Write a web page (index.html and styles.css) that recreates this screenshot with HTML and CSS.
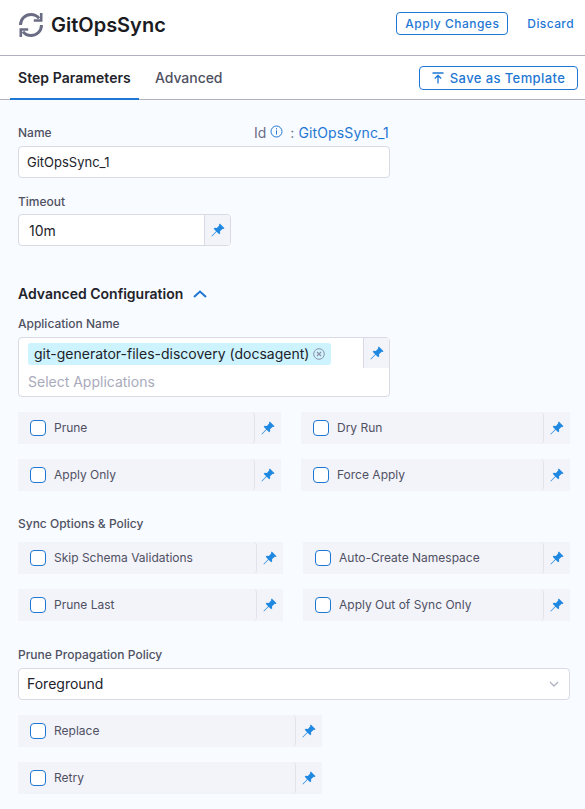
FILE: index.html
```html
<!DOCTYPE html>
<html lang="en">
<head>
    <meta charset="UTF-8">
    <meta name="viewport" content="width=device-width, initial-scale=1.0">
    <title>GitOpsSync</title>
    <link rel="stylesheet" href="styles.css">
</head>
<body>
    <svg class="defs" width="0" height="0">
        <symbol id="pin" viewBox="0 0 14 14">
            <path d="M8.800 .5 13.500 5.200 12.600 6 11.700 5.700 9 8.200 9.200 10.300 8.200 11.300 5.600 8.700 .9 13.500 .5 13.100 5.100 8.200 2.700 5.800 3.700 4.800 5.900 5 8.300 2.300 8 1.400Z" fill="currentColor"/>
        </symbol>
    </svg>

    <header class="top-bar">
        <div class="title">
            <svg class="sync-icon" width="26" height="26" viewBox="0 0 26 26" fill="none" stroke="#6b6d85" stroke-width="3">
                <path d="M2.500 13C2.500 7 7.200 2.500 13 2.500c3.300 0 6.200 1.500 8 3.900"/>
                <path d="M23.500 13C23.500 19 18.800 23.500 13 23.500c-3.300 0-6.200-1.500-8-3.900"/>
                <path d="M23.200 1V8.500H15.800" stroke-width="2.600"/>
                <path d="M2.800 25V17.500H10.200" stroke-width="2.600"/>
            </svg>
            <h1>GitOpsSync</h1>
        </div>
        <div class="top-actions">
            <button class="btn-outline apply">Apply Changes</button>
            <a class="discard" href="#">Discard</a>
        </div>
    </header>

    <nav class="tabs">
        <a class="tab active" href="#">Step Parameters</a>
        <a class="tab" href="#">Advanced</a>
        <button class="btn-outline save">
            <svg width="12" height="12" viewBox="0 0 12 12" fill="none" stroke="currentColor" stroke-width="1.300">
                <path d="M.5 1H11.500M6 11.500V3.500M2.800 6.500 6 3.500 9.200 6.500"/>
            </svg>
            Save as Template
        </button>
    </nav>

    <main class="content">
        <div class="name-head">
            <label class="field-label">Name</label>
            <div class="id-line">
                <span class="id-text">Id</span>
                <svg class="info" width="13" height="13" viewBox="0 0 13 13" fill="none" stroke="#1f77d4">
                    <circle cx="6.500" cy="6.500" r="5.500"/>
                    <path d="M6.500 5.500V9.500M6.500 3.200V4.400"/>
                </svg>
                <span class="id-colon">:</span>
                <span class="id-value">GitOpsSync_1</span>
            </div>
        </div>
        <div class="input name-input">GitOpsSync_1</div>

        <label class="field-label timeout-label">Timeout</label>
        <div class="input timeout-input">
            <span class="timeout-value">10m</span>
            <span class="pin-cell"><svg class="pin" width="14" height="14"><use href="#pin"/></svg></span>
        </div>

        <div class="section-head">
            <h2>Advanced Configuration</h2>
            <svg width="14" height="8" viewBox="0 0 14 8" fill="none" stroke="#1f77d4" stroke-width="2">
                <path d="M1 7 7 1.500 13 7"/>
            </svg>
        </div>

        <label class="field-label app-label">Application Name</label>
        <div class="app-box">
            <div class="app-top">
                <span class="chip">
                    <span class="chip-text">git-generator-files-discovery (docsagent)</span>
                    <svg width="12" height="12" viewBox="0 0 12 12" fill="none" stroke="#8f90a6">
                        <circle cx="6" cy="6" r="5.300"/>
                        <path d="M4 4 8 8M8 4 4 8" stroke-width="1.200"/>
                    </svg>
                </span>
                <span class="pin-cell"><svg class="pin" width="14" height="14"><use href="#pin"/></svg></span>
            </div>
            <div class="placeholder">Select Applications</div>
        </div>

        <div class="check-grid first-grid">
            <div class="check-row"><span class="check-main"><i class="box"></i><span class="check-text">Prune</span></span><span class="pin-cell"><svg class="pin" width="14" height="14"><use href="#pin"/></svg></span></div>
            <div class="check-row"><span class="check-main"><i class="box"></i><span class="check-text">Dry Run</span></span><span class="pin-cell"><svg class="pin" width="14" height="14"><use href="#pin"/></svg></span></div>
            <div class="check-row"><span class="check-main"><i class="box"></i><span class="check-text">Apply Only</span></span><span class="pin-cell"><svg class="pin" width="14" height="14"><use href="#pin"/></svg></span></div>
            <div class="check-row"><span class="check-main"><i class="box"></i><span class="check-text">Force Apply</span></span><span class="pin-cell"><svg class="pin" width="14" height="14"><use href="#pin"/></svg></span></div>
        </div>

        <h3 class="sub-head">Sync Options &amp; Policy</h3>
        <div class="check-grid second-grid">
            <div class="check-row"><span class="check-main"><i class="box"></i><span class="check-text">Skip Schema Validations</span></span><span class="pin-cell"><svg class="pin" width="14" height="14"><use href="#pin"/></svg></span></div>
            <div class="check-row"><span class="check-main"><i class="box"></i><span class="check-text">Auto-Create Namespace</span></span><span class="pin-cell"><svg class="pin" width="14" height="14"><use href="#pin"/></svg></span></div>
            <div class="check-row"><span class="check-main"><i class="box"></i><span class="check-text">Prune Last</span></span><span class="pin-cell"><svg class="pin" width="14" height="14"><use href="#pin"/></svg></span></div>
            <div class="check-row"><span class="check-main"><i class="box"></i><span class="check-text">Apply Out of Sync Only</span></span><span class="pin-cell"><svg class="pin" width="14" height="14"><use href="#pin"/></svg></span></div>
        </div>

        <label class="field-label policy-label">Prune Propagation Policy</label>
        <div class="input select-input">
            <span class="select-value">Foreground</span>
            <svg width="10" height="6" viewBox="0 0 10 6" fill="none" stroke="#b0b1c3" stroke-width="1.300">
                <path d="M1 1 5 5 9 1"/>
            </svg>
        </div>

        <div class="single-col">
            <div class="check-row"><span class="check-main"><i class="box"></i><span class="check-text">Replace</span></span><span class="pin-cell"><svg class="pin" width="14" height="14"><use href="#pin"/></svg></span></div>
            <div class="check-row"><span class="check-main"><i class="box"></i><span class="check-text">Retry</span></span><span class="pin-cell"><svg class="pin" width="14" height="14"><use href="#pin"/></svg></span></div>
        </div>
    </main>
</body>
</html>
```

FILE: styles.css
```css
* {
    box-sizing: border-box;
}
body {
    margin: 0;
    height: 809px;
    overflow: hidden;
    font-family: Inter, "Liberation Sans", sans-serif;
    background-color: #f8fbff;
    color: #22222a;
}
.defs {
    display: none;
}
.top-bar {
    height: 56px;
    background-color: white;
    border-bottom: 1px solid #b0b1c0;
    display: flex;
    align-items: center;
    justify-content: space-between;
    padding: 0 11px 8px 18px;
}
.title {
    display: flex;
    align-items: center;
    gap: 7px;
    margin-top: 2px;
}
h1 {
    margin: 0;
    font-size: 20px;
    font-weight: 600;
    color: #1b1b22;
}
.top-actions {
    display: flex;
    align-items: center;
    gap: 19px;
}
.btn-outline {
    font-family: inherit;
    font-size: 12px;
    font-weight: 500;
    letter-spacing: .5px;
    color: #1f77d4;
    background: white;
    border: 1px solid #1f77d4;
    border-radius: 4px;
    padding: 0;
}
.apply {
    width: 112px;
    height: 23px;
}
.discard {
    font-size: 12px;
    font-weight: 500;
    letter-spacing: .4px;
    color: #1f77d4;
    text-decoration: none;
}
.tabs {
    height: 44px;
    background-color: white;
    border-bottom: 1px solid #b0b1c0;
    display: flex;
    align-items: center;
    padding: 0 7px 0 10px;
}
.tab {
    height: 43px;
    line-height: 43px;
    font-size: 14px;
    font-weight: 500;
    color: #4f5162;
    text-decoration: none;
    padding: 0 8px;
    letter-spacing: -.05px;
}
.tab.active {
    width: 129px;
    font-weight: 600;
    letter-spacing: .05px;
    color: #22222a;
    border-bottom: 2px solid #1f77d4;
    margin-right: 8px;
    margin-bottom: -1px;
    height: 44px;
}
.save {
    margin-left: auto;
    width: 159px;
    height: 24px;
    display: flex;
    align-items: center;
    justify-content: center;
    gap: 6px;
    font-size: 13px;
    letter-spacing: .4px;
}
.content {
    padding: 24px 15px 0 18px;
}
.field-label {
    display: block;
    height: 16px;
    font-size: 12px;
    font-weight: 500;
    line-height: 18px;
    color: #4f5162;
}
.name-head {
    width: 372px;
    display: flex;
    justify-content: space-between;
    align-items: center;
    height: 16px;
    margin-bottom: 6px;
}
.id-line {
    display: flex;
    align-items: center;
    width: 136px;
    font-size: 14px;
    line-height: 18px;
    color: #6b6d85;
    padding-top: 2px;
}
.id-text {
    margin-right: 4px;
}
.info {
    margin-top: -4px;
}
.id-colon {
    margin: 0 4px 0 7px;
}
.id-value {
    color: #1f77d4;
    letter-spacing: .15px;
    white-space: nowrap;
}
.input {
    background: white;
    border: 1px solid #d9dae5;
    border-radius: 4px;
    height: 32px;
    font-size: 13px;
    display: flex;
    align-items: center;
    padding-left: 8px;
    color: #22222a;
}
.name-input {
    width: 372px;
}
.timeout-label {
    margin-top: 15px;
    margin-bottom: 5px;
}
.timeout-input {
    width: 213px;
    padding-left: 0;
    overflow: hidden;
    justify-content: space-between;
}
.timeout-value {
    padding-left: 10px;
    font-size: 14px;
}
.timeout-input .pin-cell {
    height: 30px;
    width: 26px;
    border-left: 1px solid #d9dae5;
}
.pin-cell {
    display: flex;
    align-items: center;
    justify-content: center;
    background-color: #f3f3fa;
    color: #1f88e0;
}
.section-head {
    display: flex;
    align-items: center;
    gap: 10px;
    margin-top: 40px;
    height: 16px;
}
h2 {
    margin: 0 0 1px;
    font-size: 14px;
    line-height: 15px;
    font-weight: 600;
    color: #22222a;
}
.app-label {
    margin-top: 13px;
    margin-bottom: 6px;
}
.app-box {
    width: 372px;
    height: 60px;
    background: white;
    border: 1px solid #d9dae5;
    border-radius: 4px;
}
.app-top {
    display: flex;
    justify-content: space-between;
    height: 30px;
}
.chip {
    margin: 5px 0 0 9px;
    height: 22px;
    width: 303px;
    border-radius: 3px;
    background-color: #cdf4fe;
    display: flex;
    align-items: center;
    gap: 4px;
    padding-left: 6px;
    font-size: 14px;
    color: #22222a;
    white-space: nowrap;
}
.chip-text {
    padding-bottom: 2px;
}
.app-top .pin-cell {
    width: 26px;
    border-left: 1px solid #d9dae5;
}
.placeholder {
    padding: 5px 0 0 9px;
    font-size: 14px;
    color: #a9aabb;
}
.check-grid {
    display: grid;
    row-gap: 15px;
    width: 552px;
}
.first-grid {
    margin-top: 15px;
    grid-template-columns: 263px 269px;
    column-gap: 20px;
}
.second-grid {
    grid-template-columns: 265px 267px;
    column-gap: 20px;
}
.check-row {
    display: flex;
    height: 32px;
    background-color: #f3f3fa;
}
.check-main {
    flex: 1;
    display: flex;
    align-items: center;
    gap: 8px;
    padding-left: 12px;
    font-size: 12px;
    color: #4f5162;
    border-right: 1px solid #e3e3ec;
    border-radius: 0 4px 4px 0;
}
.check-text {
    padding-bottom: 2px;
}
.check-row .pin-cell {
    width: 26px;
}
.box {
    width: 16px;
    height: 16px;
    background: white;
    border: 1px solid #1f77d4;
    border-radius: 4px;
}
.sub-head {
    margin: 25px 0 10px;
    font-size: 12px;
    line-height: 16px;
    font-weight: 500;
    color: #4f5162;
}
.policy-label {
    margin-top: 25px;
    margin-bottom: 6px;
}
.select-input {
    width: 552px;
    justify-content: space-between;
    padding-right: 10px;
    font-size: 14px;
}
.select-value {
    padding-bottom: 2px;
}
.single-col {
    display: grid;
    row-gap: 15px;
    width: 304px;
    margin-top: 15px;
}
```
